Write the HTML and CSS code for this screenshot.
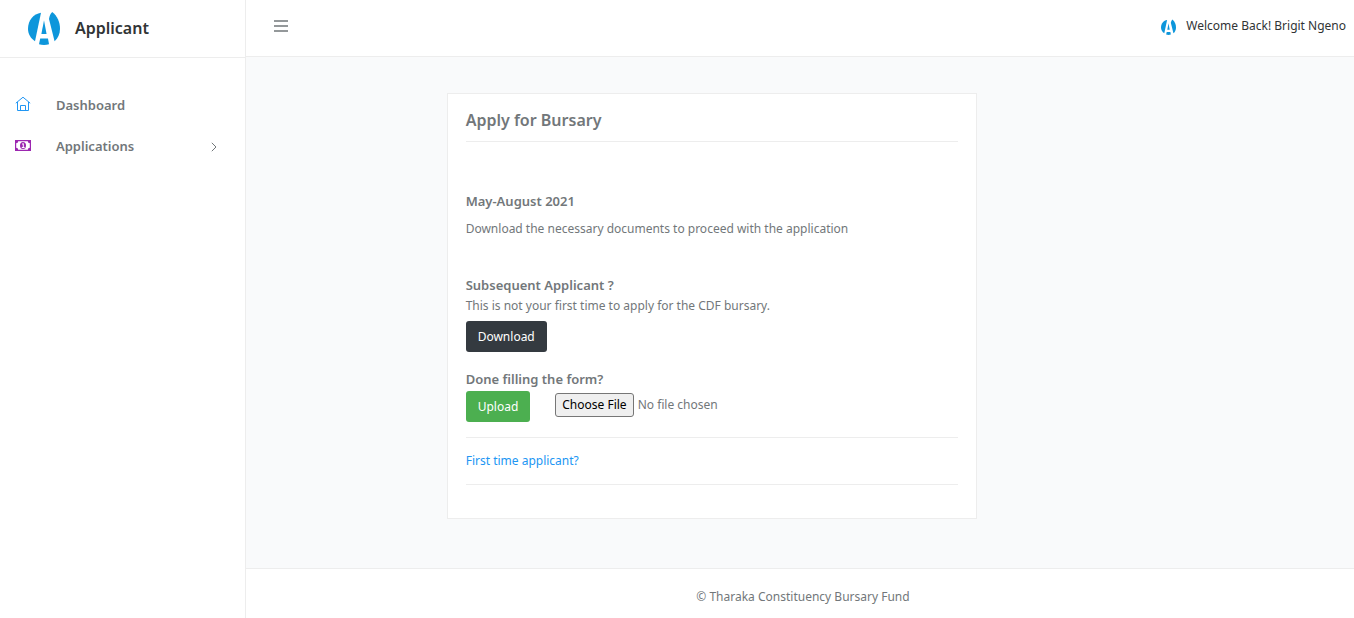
FILE: index.html
```html
<!DOCTYPE html>
<html lang="en">
<head>
<meta charset="utf-8">
<meta name="viewport" content="width=device-width, initial-scale=1">
<title>Apply for Bursary</title>
<link rel="stylesheet" href="styles.css">
</head>
<body>
<svg class="sprite" aria-hidden="true">
  <symbol id="logo" viewBox="0 0 32 34">
    <path d="M13 1.800 7 30.200C2.600 27.600 0 22.800 0 17.800 0 9.200 5.500 3 13 1.800Z"/>
    <path d="M24.200 1C29.200 5 32 10.800 32 17.800c0 5-2 9.400-5.400 12.400L21 8C21.400 5.200 22.400 2.800 24.200 1Z"/>
    <path d="M16 9.200 18.600 23h-5.200Z"/>
    <path d="M12.200 27.600h7.800l1 5.600c-3.200 1-6.800 1-10 0Z"/>
  </symbol>
</svg>
<div class="app">
  <aside class="sidebar">
    <a class="brand" href="#">
      <svg class="brand-logo" aria-hidden="true"><use href="#logo"/></svg>
      <span class="brand-name">Applicant</span>
    </a>
    <nav class="menu">
      <a class="menu-item" href="#">
        <svg class="menu-icon home" viewBox="0 0 16 16" aria-hidden="true"><path d="M.8 6.200 8 .2l7.200 6M2.500 5v8.500h11V5M5.500 13.500v-5h5v5"/></svg>
        <span>Dashboard</span>
      </a>
      <a class="menu-item" href="#">
        <svg class="menu-icon money" viewBox="0 0 16 16" aria-hidden="true"><path fill-rule="evenodd" d="M0 2h16v11H0ZM3.200 3.200A2 2 0 0 1 1.200 5.200v4.600a2 2 0 0 1 2 2h9.600a2 2 0 0 1 2-2V5.200a2 2 0 0 1-2-2Z"/><ellipse cx="8" cy="7.500" rx="3" ry="3.500"/><path class="digit" d="M7 6.300 8.300 5.500v4M6.800 9.500h2.800"/></svg>
        <span>Applications</span>
        <svg class="arrow" viewBox="0 0 6 12" aria-hidden="true"><path d="m.8 2.800 4.200 4.200L.8 11.200"/></svg>
      </a>
    </nav>
  </aside>
  <div class="page">
    <header class="topbar">
      <button class="toggle" type="button" aria-label="Toggle menu">
        <svg viewBox="0 0 14 12" aria-hidden="true"><path d="M0 1h14M0 6h14M0 11h14"/></svg>
      </button>
      <a class="user" href="#">
        <svg class="user-logo" aria-hidden="true"><use href="#logo"/></svg>
        <span>Welcome Back! Brigit Ngeno</span>
      </a>
    </header>
    <main class="content">
      <section class="card">
        <h1 class="card-title">Apply for Bursary</h1>
        <div class="intro">
          <h2 class="label">May-August 2021</h2>
          <p class="text">Download the necessary documents to proceed with the application</p>
        </div>
        <div class="block">
          <h2 class="label">Subsequent Applicant ?</h2>
          <p class="text">This is not your first time to apply for the CDF bursary.</p>
          <button class="btn dark" type="button">Download</button>
        </div>
        <form class="upload">
          <label class="label" for="form-file">Done filling the form?</label>
          <div class="upload-row">
            <button class="btn green" type="button">Upload</button>
            <input class="file" id="form-file" type="file">
          </div>
        </form>
        <div class="first-time"><a href="#">First time applicant?</a></div>
      </section>
    </main>
    <footer class="footer">© Tharaka Constituency Bursary Fund</footer>
  </div>
</div>
</body>
</html>
```
FILE: styles.css
```css
* { box-sizing: border-box; }
body {
  margin: 0;
  background: #f9fafb;
  color: #72777a;
  font: 12px/20px "Segoe UI", "Noto Sans", "Open Sans", sans-serif;
}
a { color: inherit; text-decoration: none; }
h1, h2, p { margin: 0; }
.sprite { position: absolute; width: 0; height: 0; }
.app { display: flex; min-height: 100vh; }
.sidebar {
  flex: 0 0 246px;
  background: #fff;
  border-right: 1px solid #ededed;
}
.brand {
  display: flex;
  align-items: center;
  gap: 15px;
  height: 58px;
  padding: 0 28px 2px;
  border-bottom: 1px solid #ededed;
  color: #313435;
}
.brand-logo { width: 32px; height: 34px; fill: #0d96db; }
.brand-name { font-size: 16px; font-weight: 600; }
.menu { padding-top: 26px; }
.menu-item {
  display: flex;
  align-items: center;
  height: 41px;
  padding: 0 28px 0 15px;
  font-size: 13px;
  font-weight: 600;
}
.menu-icon { width: 16px; height: 16px; margin-right: 25px; }
.home { fill: none; stroke: #2196f3; }
.money { fill: #9c27b0; }
.digit { fill: none; stroke: #fff; }
.arrow { width: 6px; height: 12px; margin-left: auto; fill: none; stroke: #72777a; }
.page { display: flex; flex: 1; flex-direction: column; min-width: 0; }
.topbar {
  display: flex;
  align-items: center;
  justify-content: space-between;
  height: 57px;
  padding: 0 8px 4px 28px;
  background: #fff;
  border-bottom: 1px solid #ededed;
}
.toggle { padding: 0; border: 0; background: none; line-height: 0; }
.toggle svg { width: 14px; height: 12px; stroke: #72777a; stroke-width: 1.5; }
.user { display: flex; align-items: center; gap: 10px; color: #313435; }
.user-logo { width: 15px; height: 16px; margin-top: 2px; fill: #0d96db; }
.content {
  display: grid;
  flex: 1;
  grid-template-columns: repeat(6, 1fr);
  align-items: start;
  padding: 36px 24px;
}
.card {
  grid-column: 2 / span 3;
  padding: 16px 18px 33px;
  background: #fff;
  border: 1px solid #ededed;
}
.card-title {
  padding-bottom: 11px;
  border-bottom: 1px solid #ededed;
  font-size: 16px;
  font-weight: 600;
}
.label { display: block; font-size: 13px; font-weight: 600; }
.intro { display: grid; gap: 8px; padding-top: 49px; }
.block { padding: 36px 0 17px; }
.block .label { margin-bottom: 1px; }
.block .btn { margin-top: 5px; }
.btn {
  height: 31px;
  padding: 0 12px;
  border: 0;
  border-radius: 3px;
  color: #fff;
  font: inherit;
}
.dark { background: #343a40; }
.green { background: #4caf50; }
.upload { padding-bottom: 15px; border-bottom: 1px solid #ededed; }
.upload-row { display: flex; align-items: center; gap: 25px; margin-top: 2px; }
.file { flex: 1; min-width: 0; padding-bottom: 3px; color: inherit; font: inherit; }
.file::file-selector-button {
  height: 24px;
  padding: 0 6px;
  border: 1px solid #767676;
  border-radius: 3px;
  background: #efefef;
  color: #000;
  font: inherit;
}
.first-time { padding: 13px 0; border-bottom: 1px solid #ededed; color: #2196f3; }
.footer {
  padding: 18px 16px 11px 22px;
  background: #fff;
  border-top: 1px solid #ededed;
  text-align: center;
}
```
